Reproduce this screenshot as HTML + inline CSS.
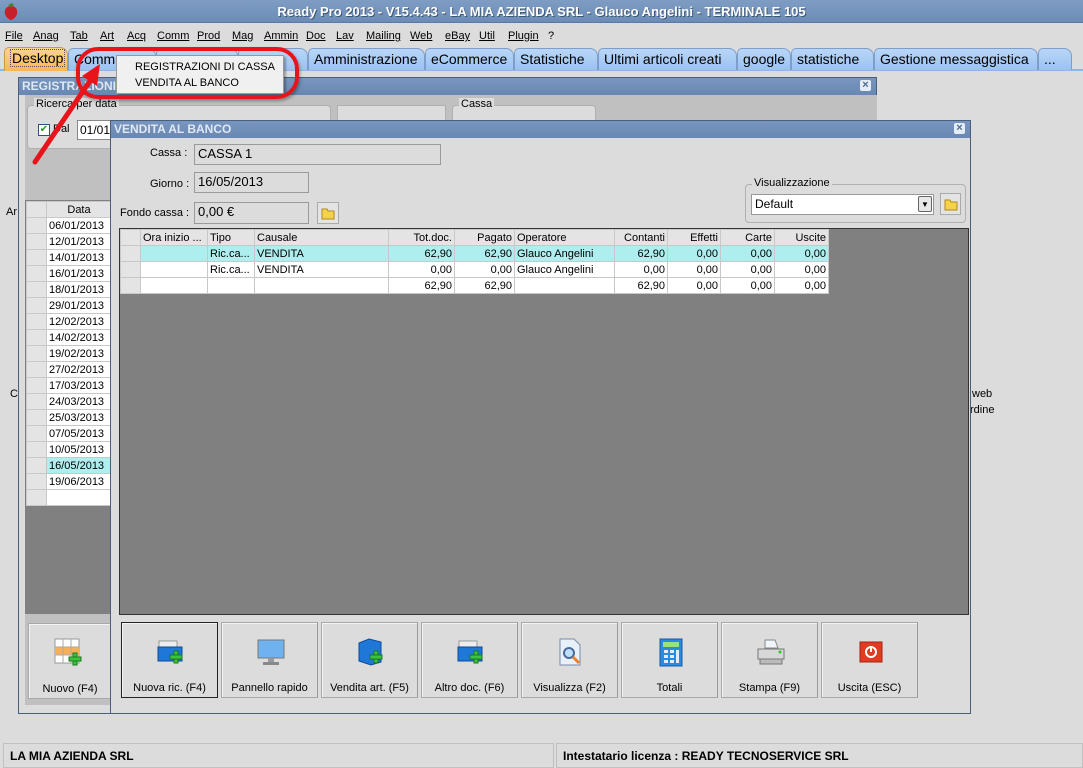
<!DOCTYPE html>
<html><head><meta charset="utf-8"><style>
*{box-sizing:border-box;margin:0;padding:0}
body{width:1083px;height:768px;overflow:hidden;background:#dcdcdc;font-family:"Liberation Sans",sans-serif;font-size:11px;color:#000;position:relative}
.a{position:absolute}
.title{left:0;top:0;width:1083px;height:23px;background:linear-gradient(#7f9dc3,#6c8cb7);color:#fff;font-weight:bold;font-size:13px;text-align:center;line-height:23px;text-shadow:1px 1px 0 #3d5576;border-bottom:1px solid #5a7aa6}
.menu{left:0;top:26px;height:18px;font-size:11px}
.menu span{position:absolute;top:4px;text-decoration:underline}
.tabbar{left:0;top:46px;width:1083px;height:25px;background:#dcdcdc;border-bottom:2px solid #8fb5e8}
.tab{position:absolute;top:48px;height:22px;background:linear-gradient(#b9d6f8,#9bc2f1);border:1px solid #7d9ec9;border-bottom:none;border-radius:5px 8px 0 0;font-size:14px;line-height:21px;padding-left:5px;white-space:nowrap;overflow:hidden}
.win{border:1px solid #4a5f7c}
.wt{height:17px;background:linear-gradient(#7896bf,#6887b2);color:#dfe8f3;font-weight:bold;font-size:12px;line-height:17px;padding-left:3px}
.x{position:absolute;right:5px;top:2px;width:11px;height:11px;background:#e4ecf6;color:#4d6a93;font-size:11px;line-height:11px;text-align:center;font-weight:bold;border-radius:2px}
.fld{background:#dcdcdc;border:1px solid #9a9a9a;font-size:13px;padding-left:3px;line-height:18px}
.lbl{font-size:11px}
table{border-collapse:collapse;font-size:11px}
td{border:1px solid #c8c8c8;height:16px;padding:0 2px;white-space:nowrap;overflow:hidden}
.hd td{background:#e4e4e4;border-color:#c8c8c8}
.r{text-align:right}
.ind{background:#e4e4e4;width:20px}
.btn{position:absolute;top:622px;width:97px;height:76px;background:#dcdcdc;border:1px solid #a8a8a8;border-right-color:#9a9a9a;box-shadow:inset 1px 1px 0 #f4f4f4;text-align:center;font-size:11px}
.btn .t{position:absolute;left:0;right:0;top:59px}
.btn svg{position:absolute;left:34px;top:14px}
.status{top:743px;height:25px;border:1px solid #c0c0c0;font-weight:bold;font-size:12px;line-height:24px;padding-left:6px}
.grp{border:1px solid #b0b0b0;border-radius:4px}
.grp .gl{position:absolute;top:-8px;left:6px;background:inherit;padding:0 2px;font-size:11px}
</style></head><body>

<div class="a title">Ready Pro 2013 - V15.4.43 - LA MIA AZIENDA SRL - Glauco Angelini - TERMINALE 105</div>
<svg class="a" style="left:3px;top:2px" width="16" height="18"><path d="M8 4 C3 4 1 8 2 12 C3 16 7 18 8 18 C9 18 13 16 14 12 C15 8 13 4 8 4Z" fill="#c8202a"/><path d="M5 3 L8 5 L11 3 L9 1 Z" fill="#3a8a2a"/></svg>

<div class="a menu">
<span style="left:5px">File</span><span style="left:33px">Anag</span><span style="left:70px">Tab</span><span style="left:100px">Art</span><span style="left:127px">Acq</span><span style="left:157px">Comm</span><span style="left:197px">Prod</span><span style="left:232px">Mag</span><span style="left:264px">Ammin</span><span style="left:306px">Doc</span><span style="left:336px">Lav</span><span style="left:366px">Mailing</span><span style="left:410px">Web</span><span style="left:445px">eBay</span><span style="left:479px">Util</span><span style="left:508px">Plugin</span><span style="left:548px;text-decoration:none">?</span>
</div>

<div class="a tabbar"></div>
<div class="tab" style="left:68px;width:88px">Comm</div>
<div class="tab" style="left:156px;width:82px"></div>
<div class="tab" style="left:238px;width:70px"></div>
<div class="tab" style="left:308px;width:117px">Amministrazione</div>
<div class="tab" style="left:425px;width:89px">eCommerce</div>
<div class="tab" style="left:514px;width:84px">Statistiche</div>
<div class="tab" style="left:598px;width:139px">Ultimi articoli creati</div>
<div class="tab" style="left:737px;width:54px">google</div>
<div class="tab" style="left:791px;width:83px">statistiche</div>
<div class="tab" style="left:874px;width:164px">Gestione messaggistica</div>
<div class="tab" style="left:1038px;width:34px">...</div>
<div class="tab" style="left:4px;width:64px;background:linear-gradient(#fbd48c,#f6b955);border-color:#c99a4a;top:47px;height:24px"><span style="border:1px dotted #555;padding:0 1px">Desktop</span></div>

<div class="a" style="left:6px;top:206px;font-size:11px">Ar</div>
<div class="a" style="left:10px;top:388px;font-size:11px">C</div>
<div class="a" style="left:972px;top:388px;font-size:11px">web</div>
<div class="a" style="left:970px;top:404px;font-size:11px">rdine</div>

<!-- Registrazioni window -->
<div class="a win" style="left:18px;top:77px;width:859px;height:637px;background:#dcdcdc">
 <div class="wt">REGISTRAZIONI DI CASSA</div><div class="x">×</div>
 <div class="a" style="left:6px;top:17px;width:852px;height:610px;background:#c0c0c0"></div>
 <div class="a grp" style="left:8px;top:27px;width:304px;height:44px;background:#dcdcdc"><span class="gl">Ricerca per data</span></div>
 <div class="a" style="left:19px;top:46px;width:12px;height:12px;background:#fff;border:1px solid #33507a;color:#2a9a2a;font-size:10px;line-height:10px;text-align:center">✔</div>
 <div class="a" style="left:34px;top:45px">Dal</div>
 <div class="a" style="left:58px;top:42px;width:60px;height:20px;background:#fff;border:1px solid #888;font-size:12px;line-height:18px;padding-left:2px">01/01/</div>
 <div class="a" style="left:318px;top:27px;width:109px;height:44px;background:#dcdcdc;border:1px solid #b0b0b0"></div>
 <div class="a grp" style="left:433px;top:27px;width:144px;height:44px;background:#dcdcdc"><span class="gl">Cassa</span></div>
 <div class="a" style="left:6px;top:122px;width:86px;height:414px;background:#808080"></div>
 <table class="a" style="left:7px;top:123px;width:86px;background:#fff">
  <tr class="hd"><td style="width:20px"></td><td style="text-align:center">Data</td></tr>
  <tr><td class="ind"></td><td>06/01/2013</td></tr><tr><td class="ind"></td><td>12/01/2013</td></tr><tr><td class="ind"></td><td>14/01/2013</td></tr><tr><td class="ind"></td><td>16/01/2013</td></tr><tr><td class="ind"></td><td>18/01/2013</td></tr><tr><td class="ind"></td><td>29/01/2013</td></tr><tr><td class="ind"></td><td>12/02/2013</td></tr><tr><td class="ind"></td><td>14/02/2013</td></tr><tr><td class="ind"></td><td>19/02/2013</td></tr><tr><td class="ind"></td><td>27/02/2013</td></tr><tr><td class="ind"></td><td>17/03/2013</td></tr><tr><td class="ind"></td><td>24/03/2013</td></tr><tr><td class="ind"></td><td>25/03/2013</td></tr><tr><td class="ind"></td><td>07/05/2013</td></tr><tr><td class="ind"></td><td>10/05/2013</td></tr><tr><td class="ind"></td><td style="background:#aeeeee">16/05/2013</td></tr><tr><td class="ind"></td><td>19/06/2013</td></tr><tr><td class="ind"></td><td></td></tr>
 </table>
 <div class="btn" style="left:9px;top:545px;width:84px"><svg width="28" height="28" style="left:25px"><rect x="1" y="1" width="24" height="24" fill="#fff" stroke="#999"/><rect x="1" y="9" width="24" height="8" fill="#f7b05a"/><path d="M9 1V25M17 1V25M1 9H25M1 17H25" stroke="#aaa"/><path d="M17 19h4v-4h4v4h4" fill="none"/><rect x="19" y="15" width="4" height="12" fill="#3cc23c" stroke="#1a7a1a"/><rect x="15" y="19" width="12" height="4" fill="#3cc23c" stroke="#1a7a1a"/></svg><div class="t">Nuovo (F4)</div></div>
</div>

<!-- Vendita window -->
<div class="a win" style="left:110px;top:120px;width:861px;height:594px;background:#dcdcdc">
 <div class="wt">VENDITA AL BANCO</div><div class="x">×</div>
 <div class="a lbl" style="left:39px;top:26px">Cassa :</div>
 <div class="a fld" style="left:83px;top:23px;width:247px;height:21px">CASSA 1</div>
 <div class="a lbl" style="left:39px;top:57px">Giorno :</div>
 <div class="a fld" style="left:83px;top:51px;width:115px;height:21px">16/05/2013</div>
 <div class="a lbl" style="left:9px;top:86px">Fondo cassa :</div>
 <div class="a fld" style="left:83px;top:81px;width:115px;height:22px">0,00 €</div>
 <div class="a" style="left:206px;top:81px;width:22px;height:22px;border:1px solid #aaa;background:#e4e4e4"><svg width="20" height="20"><path d="M4 6h5l1 2h6v8H4Z" fill="#f4d24a" stroke="#b08a1a"/></svg></div>
 <div class="a grp" style="left:634px;top:63px;width:221px;height:39px"><span class="gl" style="background:#dcdcdc">Visualizzazione</span></div>
 <div class="a" style="left:640px;top:73px;width:183px;height:21px;background:#fff;border:1px solid #999;font-size:12px;line-height:19px;padding-left:3px">Default</div>
 <div class="a" style="left:807px;top:75px;width:14px;height:16px;border:1px solid #666;border-radius:2px;background:#e8e8e8;font-size:8px;text-align:center;line-height:15px">▼</div>
 <div class="a" style="left:829px;top:72px;width:21px;height:22px;border:1px solid #aaa;background:#e4e4e4"><svg width="20" height="20"><path d="M4 6h5l1 2h6v8H4Z" fill="#f4d24a" stroke="#b08a1a"/></svg></div>
 <div class="a" style="left:8px;top:107px;width:850px;height:387px;background:#808080;border:1px solid #333"></div>
 <table class="a" style="left:9px;top:108px;width:708px;background:#fff;table-layout:fixed">
  <colgroup><col style="width:20px"><col style="width:67px"><col style="width:47px"><col style="width:134px"><col style="width:66px"><col style="width:60px"><col style="width:100px"><col style="width:53px"><col style="width:53px"><col style="width:54px"><col style="width:54px"></colgroup>
  <tr class="hd"><td></td><td>Ora inizio ...</td><td>Tipo</td><td>Causale</td><td class="r">Tot.doc.</td><td class="r">Pagato</td><td>Operatore</td><td class="r">Contanti</td><td class="r">Effetti</td><td class="r">Carte</td><td class="r">Uscite</td></tr>
  <tr style="background:#aeeeee"><td class="ind"></td><td></td><td>Ric.ca...</td><td>VENDITA</td><td class="r">62,90</td><td class="r">62,90</td><td>Glauco Angelini</td><td class="r">62,90</td><td class="r">0,00</td><td class="r">0,00</td><td class="r">0,00</td></tr>
  <tr><td class="ind"></td><td></td><td>Ric.ca...</td><td>VENDITA</td><td class="r">0,00</td><td class="r">0,00</td><td>Glauco Angelini</td><td class="r">0,00</td><td class="r">0,00</td><td class="r">0,00</td><td class="r">0,00</td></tr>
  <tr><td class="ind"></td><td></td><td></td><td></td><td class="r">62,90</td><td class="r">62,90</td><td></td><td class="r">62,90</td><td class="r">0,00</td><td class="r">0,00</td><td class="r">0,00</td></tr>
 </table>
</div>

<!-- buttons -->
<div class="btn" style="left:121px;border:1px solid #222"><svg width="30" height="30"><rect x="3" y="4" width="18" height="8" fill="#eee" stroke="#999"/><path d="M2 10h24v14H2Z" fill="#1f78d8" stroke="#0d4a98"/><rect x="18" y="14" width="4" height="12" fill="#3cc23c" stroke="#1a7a1a"/><rect x="14" y="18" width="12" height="4" fill="#3cc23c" stroke="#1a7a1a"/></svg><div class="t">Nuova ric. (F4)</div></div>
<div class="btn" style="left:221px"><svg width="30" height="30"><rect x="2" y="3" width="26" height="18" fill="#6fb2ef" stroke="#777"/><rect x="12" y="21" width="6" height="4" fill="#999"/><rect x="7" y="25" width="16" height="3" fill="#888"/></svg><div class="t">Pannello rapido</div></div>
<div class="btn" style="left:321px"><svg width="30" height="30"><path d="M3 6l10-4 12 3v20l-10 3-12-4Z" fill="#1f78d8" stroke="#0d4a98"/><rect x="18" y="14" width="4" height="12" fill="#3cc23c" stroke="#1a7a1a"/><rect x="14" y="18" width="12" height="4" fill="#3cc23c" stroke="#1a7a1a"/></svg><div class="t">Vendita art. (F5)</div></div>
<div class="btn" style="left:421px"><svg width="30" height="30"><rect x="3" y="4" width="18" height="8" fill="#eee" stroke="#999"/><path d="M2 10h24v14H2Z" fill="#1f78d8" stroke="#0d4a98"/><rect x="18" y="14" width="4" height="12" fill="#3cc23c" stroke="#1a7a1a"/><rect x="14" y="18" width="12" height="4" fill="#3cc23c" stroke="#1a7a1a"/></svg><div class="t">Altro doc. (F6)</div></div>
<div class="btn" style="left:521px"><svg width="30" height="30"><path d="M4 2h14l6 6v20H4Z" fill="#e8f0fa" stroke="#7a8aa8"/><circle cx="13" cy="16" r="5" fill="#bde0f8" stroke="#4a6a9a" stroke-width="2"/><path d="M17 20l6 6" stroke="#e8842a" stroke-width="3"/></svg><div class="t">Visualizza (F2)</div></div>
<div class="btn" style="left:621px"><svg width="30" height="30"><rect x="4" y="2" width="22" height="27" fill="#2a8ae0" stroke="#1a5aa8"/><rect x="7" y="5" width="16" height="5" fill="#9ee07a"/><path d="M8 13h4v3H8ZM14 13h4v3h-4ZM8 18h4v3H8ZM14 18h4v3h-4ZM8 23h4v3H8ZM14 23h4v3h-4ZM20 13h3v13h-3Z" fill="#e0eefa"/></svg><div class="t">Totali</div></div>
<div class="btn" style="left:721px"><svg width="30" height="30"><path d="M9 3h10l3 8H9Z" fill="#eef6fc" stroke="#888"/><path d="M2 12h26v10H2Z" fill="#d8d8d8" stroke="#777"/><path d="M4 22h22v5H4Z" fill="#bbb" stroke="#777"/><circle cx="24" cy="15" r="1.5" fill="#2c2"/></svg><div class="t">Stampa (F9)</div></div>
<div class="btn" style="left:821px"><svg width="30" height="30"><rect x="4" y="5" width="22" height="20" fill="#e03a22" stroke="#a82212"/><circle cx="15" cy="15" r="5" fill="none" stroke="#fff" stroke-width="2"/><path d="M15 9v6" stroke="#fff" stroke-width="2"/></svg><div class="t">Uscita (ESC)</div></div>

<div class="a status" style="left:3px;width:551px">LA MIA AZIENDA SRL</div>
<div class="a status" style="left:556px;width:527px">Intestatario licenza : READY TECNOSERVICE SRL</div>

<!-- popup menu -->
<div class="a" style="left:116px;top:55px;width:168px;height:39px;background:#f0f0f0;border:1px solid #999;box-shadow:2px 2px 2px rgba(0,0,0,.3);font-size:11px">
 <div class="a" style="left:18px;top:5px">REGISTRAZIONI DI CASSA</div>
 <div class="a" style="left:18px;top:21px">VENDITA AL BANCO</div>
</div>
<div class="a" style="left:76px;top:47px;width:223px;height:52px;border:4px solid #e8141a;border-radius:22px;box-shadow:1px 2px 3px rgba(0,0,0,.35)"></div>
<svg class="a" style="left:0;top:0" width="140" height="180"><path d="M35 162 L92 78" stroke="#e8141a" stroke-width="5" stroke-linecap="round"/><path d="M100 64 L82 76 L97 86 Z" fill="#e8141a"/></svg>
</body></html>
